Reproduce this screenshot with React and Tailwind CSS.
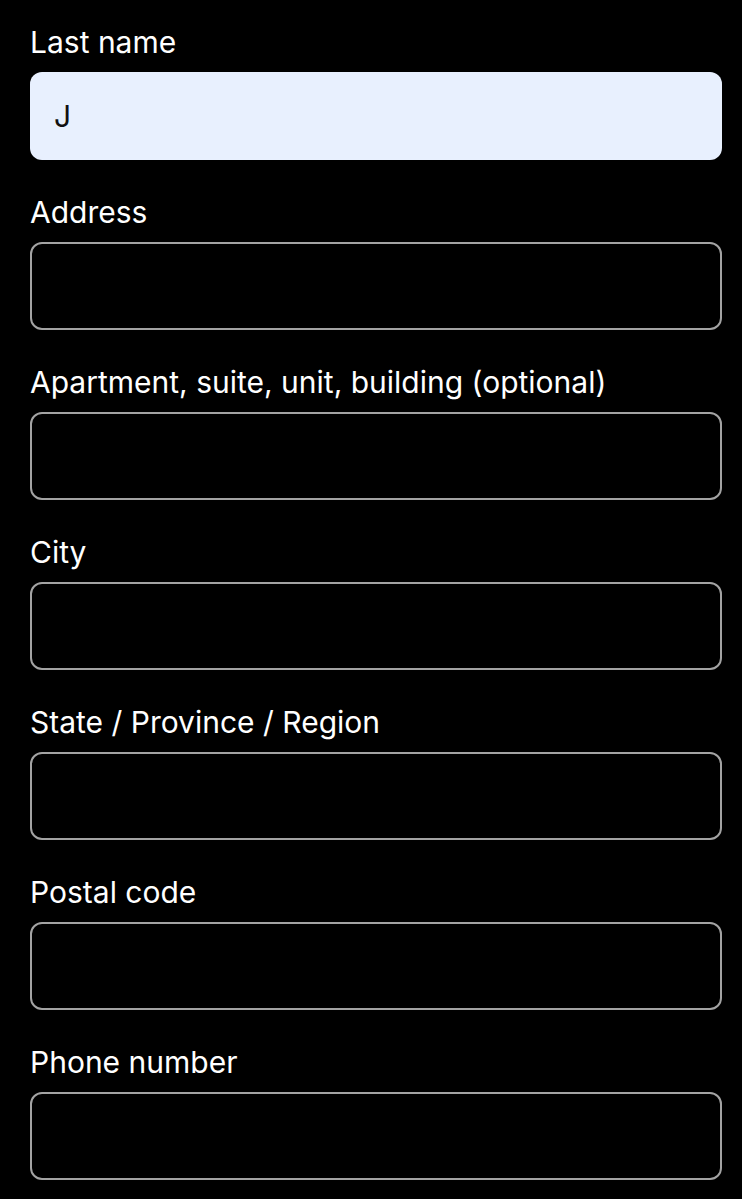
import React from "react";

const fields = [
    { label: "Last name", value: "J", filled: true },
    { label: "Address" },
    { label: "Apartment, suite, unit, building (optional)" },
    { label: "City" },
    { label: "State / Province / Region" },
    { label: "Postal code" },
    { label: "Phone number" },
];

export default function App() {
    return (
        <div className="min-h-[1199px] bg-black pt-[25px] pl-[30px] pr-[20px] font-['Inter',sans-serif]">
            <form className="flex flex-col gap-[35px]">
                {fields.map((f) => (
                    <div key={f.label} className="flex flex-col">
                        <label className="block text-[30px] leading-[34px] text-white mb-[13px]">
                            {f.label}
                        </label>
                        <input
                            type="text"
                            defaultValue={f.value || ""}
                            className={`h-[88px] w-full rounded-[12px] px-[24px] text-[30px] outline-none ${
                                f.filled
                                    ? "bg-[#e8f0fe] text-[#111] border-0"
                                    : "bg-black text-white border-2 border-[#a3a3a3]"
                            }`}
                        />
                    </div>
                ))}
            </form>
        </div>
    );
}
